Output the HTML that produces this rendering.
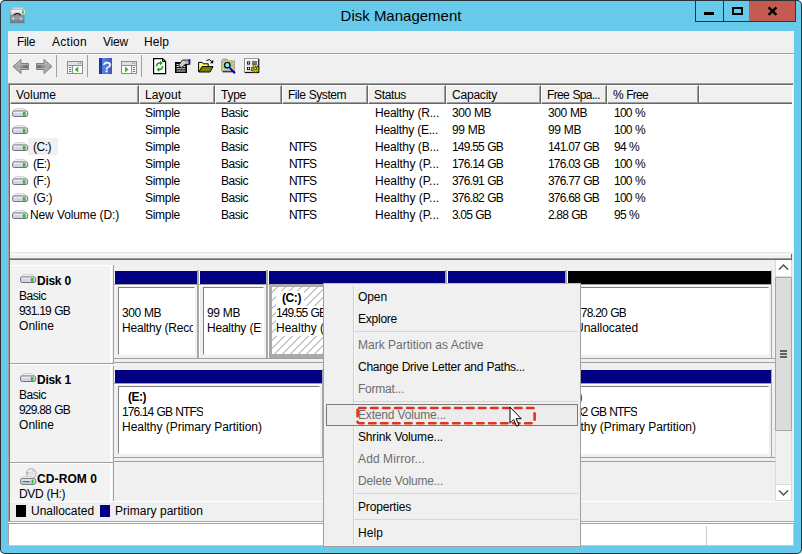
<!DOCTYPE html>
<html><head><meta charset="utf-8"><title>Disk Management</title>
<style>
html,body{margin:0;padding:0;background:#fff;}
body{width:802px;height:554px;position:relative;overflow:hidden;font-family:"Liberation Sans",sans-serif;font-size:12px;color:#000;}
#win div,#win span,#win svg{position:absolute;box-sizing:border-box;white-space:nowrap;}
#win{position:absolute;left:0;top:0;width:802px;height:554px;background:#67caea;box-shadow:inset 0 0 0 1px #2b3136;border-radius:5px;overflow:hidden;}
#win .t{line-height:14px;height:14px;font-size:12px;}
#win .u{line-height:15px;height:15px;font-size:12px;}
#win .b{font-weight:bold;}
#win .h{top:85px;height:19px;background:#f0f0f0;border-top:1px solid #fff;border-left:1px solid #fff;border-right:1px solid #696969;border-bottom:1px solid #696969;box-shadow:inset -1px -1px 0 #a0a0a0;}
#win .g{color:#6d6d6d;}
#win .sep{left:354px;width:224px;height:1px;background:#d7d7d7;}
</style></head><body>
<div id="win">
<div style="left:1px;width:800px;top:7px;text-align:center;font-size:15px;line-height:18px;height:18px;">Disk Management</div>
<div style="left:695px;top:1px;width:29px;height:21px;border:1px solid #2b3136;border-top:0;border-right:0"></div>
<div style="left:723px;top:1px;width:27px;height:21px;border:1px solid #2b3136;border-top:0;"></div>
<div style="left:749px;top:1px;width:47px;height:21px;background:#c55a50;border:1px solid #4a2a2a;border-top:0;border-left:0"></div>
<div style="left:704px;top:12px;width:10px;height:3px;background:#000"></div>
<div style="left:732px;top:7px;width:11px;height:8px;border:2px solid #000;"></div>
<svg style="left:766px;top:5px" width="13" height="12" viewBox="0 0 13 12"><path d="M2.6 2.4l7.8 7.4M10.4 2.4l-7.8 7.4" stroke="#000" stroke-width="2.5" fill="none"/></svg>
<svg style="left:10px;top:6px" width="17" height="18" viewBox="0 0 17 18"><defs><linearGradient id="ti1" x1="0" y1="0" x2="0" y2="1"><stop offset="0" stop-color="#fafafc"/><stop offset="1" stop-color="#c6c8d4"/></linearGradient><linearGradient id="ti2" x1="0" y1="0" x2="0" y2="1"><stop offset="0" stop-color="#9aa4ac"/><stop offset="1" stop-color="#6e7a84"/></linearGradient></defs><path d="M3.6 1.4h8.6l2.6 2h-13.8z" fill="#ececf0" stroke="#b8bac4" stroke-width=".7"/><rect x=".6" y="3.2" width="15" height="6.2" rx="1.6" fill="url(#ti1)" stroke="#9a9ca8" stroke-width=".8"/><rect x="12" y="4.2" width="1.8" height="3.6" fill="#2fd02f"/><path d="M3.6 9.2q3.6-3.4 7.2 0" fill="none" stroke="#1c1c1c" stroke-width="1.3"/><rect x=".6" y="9.8" width="13.4" height="7" fill="url(#ti2)" stroke="#66727c" stroke-width=".7"/><rect x="2.6" y="11.4" width="1.2" height="2.6" fill="#f2f2f2"/><rect x="10.4" y="11.4" width="1.2" height="2.6" fill="#f2f2f2"/><path d="M.8 12.6h13" stroke="#aab4bc" stroke-width=".6"/></svg>
<div style="left:8px;top:31px;width:786px;height:515px;background:#f0f0f0;"></div>
<div class="t" style="left:17px;top:35px;letter-spacing:-0.33px;">File</div>
<div class="t" style="left:52px;top:35px;letter-spacing:0.27px;">Action</div>
<div class="t" style="left:103px;top:35px;letter-spacing:-0.20px;">View</div>
<div class="t" style="left:144px;top:35px;letter-spacing:0.08px;">Help</div>
<div style="left:8px;top:53px;width:786px;height:1px;background:#a0a0a0"></div>
<div style="left:8px;top:54px;width:786px;height:1px;background:#fff"></div>
<div style="left:56px;top:55px;width:1px;height:22px;background:#a0a0a0"></div>
<div style="left:87px;top:55px;width:1px;height:22px;background:#a0a0a0"></div>
<div style="left:141px;top:55px;width:1px;height:22px;background:#a0a0a0"></div>
<svg style="left:8px;top:54px" width="262" height="28" viewBox="8 54 262 28">
<defs>
<linearGradient id="ag" x1="0" y1="0" x2="0" y2="1"><stop offset="0" stop-color="#c4c4c4"/><stop offset=".5" stop-color="#a6a6a6"/><stop offset="1" stop-color="#b8b8b8"/></linearGradient>
<linearGradient id="hg" x1="0" y1="0" x2="1" y2="0"><stop offset="0" stop-color="#1c3a9c"/><stop offset=".22" stop-color="#2a4cb4"/><stop offset=".28" stop-color="#5f82e0"/><stop offset="1" stop-color="#3458c4"/></linearGradient>
<linearGradient id="sg" x1="0" y1="0" x2="1" y2="0"><stop offset="0" stop-color="#a0a0a0"/><stop offset="1" stop-color="#5e5e5e"/></linearGradient><linearGradient id="sg2" x1="0" y1="0" x2="1" y2="0"><stop offset="0" stop-color="#5e5e5e"/><stop offset="1" stop-color="#a0a0a0"/></linearGradient>
</defs>
<!-- back / forward -->
<path d="M13 66.5L21 59.4V63.5H28.5V69.5H21V73.6Z" fill="url(#ag)" stroke="#7e7e7e" stroke-width="1" stroke-linejoin="round"/>
<path d="M52 66.5L44 59.4V63.5H36.5V69.5H44V73.6Z" fill="url(#ag)" stroke="#7e7e7e" stroke-width="1" stroke-linejoin="round"/>
<path d="M20 65.2h7.6v2.8H20z" fill="url(#sg)"/><path d="M37.4 65.2H45v2.8h-7.6z" fill="url(#sg2)"/>
<!-- console tree show/hide (left) -->
<rect x="67.5" y="61.5" width="15" height="12" fill="#fff" stroke="#8a8e98"/>
<rect x="68" y="62" width="14" height="3" fill="#dfe1e6"/>
<path d="M68 65.5h14" stroke="#8a8e98"/>
<path d="M72.5 65.5v8" stroke="#8a8e98"/>
<path d="M69 67.5h2.4M69 69.5h2.4M69 71.5h2.4" stroke="#3a78c8" stroke-width="1"/>
<path d="M78.3 66.6v5.8l-3.6-2.9z" fill="#3cb42c"/>
<rect x="78" y="62.6" width="1.2" height="1.2" fill="#8a8e98"/><rect x="80" y="62.6" width="1.2" height="1.2" fill="#8a8e98"/>
<!-- help -->
<rect x="99" y="58" width="13" height="16" fill="url(#hg)"/>
<rect x="99" y="58" width="3" height="16" fill="#1b3592" opacity=".6"/>
<text x="102.6" y="71.8" font-family="Liberation Sans, sans-serif" font-size="15.5" fill="#fff" stroke="#fff" stroke-width=".3">?</text>
<!-- console tree (right) -->
<rect x="121.5" y="61.5" width="15" height="12" fill="#fff" stroke="#8a8e98"/>
<rect x="122" y="62" width="14" height="3" fill="#dfe1e6"/>
<path d="M122 65.5h14" stroke="#8a8e98"/>
<path d="M131.5 65.5v8" stroke="#8a8e98"/>
<path d="M132.8 67.5h2.4M132.8 69.5h2.4M132.8 71.5h2.4" stroke="#3a78c8" stroke-width="1"/>
<path d="M125 66.6v5.8l3.6-2.9z" fill="#3cb42c"/>
<rect x="132" y="62.6" width="1.2" height="1.2" fill="#8a8e98"/><rect x="134" y="62.6" width="1.2" height="1.2" fill="#8a8e98"/>
<!-- refresh -->
<path d="M153.6 58.6h9l3 3v12h-12z" fill="#fff" stroke="#000" stroke-width="1.2"/>
<path d="M162.6 58.6v3h3" fill="none" stroke="#000" stroke-width="1"/>
<path d="M156.6 66.5a3 3 0 0 1 3-3.4h1" fill="none" stroke="#1a9a1a" stroke-width="1.5"/>
<path d="M160 60.8l2.6 2.3l-2.6 2.3z" fill="#1a9a1a"/>
<path d="M162.6 66.2a3 3 0 0 1-3 3.4h-1" fill="none" stroke="#1a9a1a" stroke-width="1.5"/>
<path d="M159.2 67.3l-2.6 2.3l2.6 2.3z" fill="#1a9a1a"/>
<!-- properties -->
<rect x="175" y="62" width="12" height="11" fill="#000"/>
<path d="M176.5 66.6h9M176.5 68.8h9M176.5 71h9" stroke="#e8e8e8" stroke-width="1"/>
<path d="M176.5 64.6h3" stroke="#e8e8e8" stroke-width="1"/>
<path d="M178.5 65.5l4-5.5h6.5v4.5h-4l-3.5 3.5z" fill="#b4b4b4" stroke="#000" stroke-width=".8"/>
<path d="M180 65l3.5-4M181.5 66l3.5-4" stroke="#fff" stroke-width=".8"/>
<rect x="189" y="59" width="1.4" height="5.6" fill="#1010c8"/>
<!-- open folder -->
<path d="M198.6 71.8v-9.4h3.6l1 1.4h5v2.8" fill="#ffff66" stroke="#000" stroke-width="1"/>
<path d="M198.8 72l3.2-5.4h11l-3 5.4z" fill="#808000" stroke="#000" stroke-width="1"/>
<path d="M206.5 60.5q3-2.4 5.6 1.2" fill="none" stroke="#000" stroke-width="1"/>
<path d="M213.2 59.8v3.4h-3.2z" fill="#000"/>
<!-- search -->
<path d="M221.5 71v-10.5l1.5-1.5h4l1.5 1.8h6v10.2z" fill="#b4b4b4" stroke="#989898" stroke-width=".8"/>
<path d="M222.5 71.8h12.5" stroke="#000" stroke-width="1"/>
<path d="M223 61h11M223 69.5h11M223 63v6M233 63v6" stroke="#f8f000" stroke-width="1.2" stroke-dasharray="1.2 1.2"/>
<circle cx="227.3" cy="65.2" r="2.7" fill="#7af0f0" stroke="#000" stroke-width="1.2"/>
<path d="M229.8 67.8l5.2 5.4" stroke="#0000e0" stroke-width="1.8"/>
<path d="M230.6 69.6l4 4.2" stroke="#000" stroke-width=".7"/>
<!-- grid + star -->
<rect x="244.5" y="58.7" width="14" height="13.6" fill="#e8e8e8" stroke="#8c8c8c"/>
<path d="M245 72.6h14M258.8 59v13.6" stroke="#000" stroke-width="1"/>
<path d="M245.5 59.6h12.4M245.5 59.6v12" stroke="#fff" stroke-width="1"/>
<rect x="247" y="61.5" width="3" height="3" fill="#000"/><rect x="247.8" y="62.2" width="1.4" height="1.4" fill="#fff"/>
<path d="M252 62h5M252 64h5" stroke="#000" stroke-width="1.2"/>
<rect x="247" y="67" width="3" height="3" fill="#000"/><rect x="247.8" y="67.6" width="1.4" height="1.6" fill="#fff"/>
<path d="M252 67.5v2.5h3.6v-2.5" fill="none" stroke="#000" stroke-width="1"/>
<path d="M255 64.6l.8 2.2l2.2-1.4l-.8 2.4l2.5.6l-2.2 1.2l1.4 2l-2.4-.5l-.4 2.1l-1.4-1.9l-1.7 1.5l.2-2.4l-2.4.2l1.9-1.5l-1.7-1.5l2.4-.2l-.2-2.4z" fill="#f4f000" stroke="#3a3a00" stroke-width=".6"/>
<path d="M253.8 67.2h2.6v2.6h-2.6z" fill="#e0e0e0" stroke="#000" stroke-width=".7"/>
</svg>

<div style="left:8px;top:83px;width:786px;height:171px;background:#fff;border:1px solid #a0a0a0;border-right-color:#f0f0f0;border-bottom-color:#f0f0f0;box-shadow:inset 1px 1px 0 #696969;"></div>
<div style="left:10px;top:85px;width:782px;height:19px;background:#f0f0f0;border-bottom:1px solid #696969;box-shadow:inset 0 -1px 0 #a0a0a0;"></div>
<div style="left:699px;top:85px;width:93px;height:17px;border-top:1px solid #fff;border-left:1px solid #fff;"></div>
<div class="h" style="left:10px;width:129px"></div>
<div class="t" style="left:16px;top:88px;">Volume</div>
<div class="h" style="left:139px;width:76px"></div>
<div class="t" style="left:145px;top:88px;">Layout</div>
<div class="h" style="left:215px;width:67px"></div>
<div class="t" style="left:221px;top:88px;letter-spacing:-0.25px;">Type</div>
<div class="h" style="left:282px;width:86px"></div>
<div class="t" style="left:288px;top:88px;letter-spacing:-0.47px;word-spacing:0.47px;">File System</div>
<div class="h" style="left:368px;width:78px"></div>
<div class="t" style="left:374px;top:88px;letter-spacing:-0.34px;">Status</div>
<div class="h" style="left:446px;width:95px"></div>
<div class="t" style="left:452px;top:88px;letter-spacing:-0.21px;">Capacity</div>
<div class="h" style="left:541px;width:66px"></div>
<div class="t" style="left:547px;top:88px;letter-spacing:-0.64px;word-spacing:0.64px;">Free Spa...</div>
<div class="h" style="left:607px;width:92px"></div>
<div class="t" style="left:613px;top:88px;letter-spacing:-0.74px;word-spacing:0.74px;">% Free</div>
<svg style="left:12px;top:108px" width="17" height="10" viewBox="0 0 17 10"><path d="M3.6 .6h8.4l3 2.4h-14.4z" fill="#f0f0f0" stroke="#c8c8c8" stroke-width=".8"/><rect x=".5" y="3" width="15.2" height="5.5" rx="1.8" fill="#d2d4e2" stroke="#70727a"/><rect x="1.5" y="3.7" width="13.2" height="1.1" fill="#f4f4fa"/><rect x="10.9" y="4" width="2.6" height="3.6" fill="#6e7078"/><rect x="11.4" y="4" width="1.6" height="3.6" fill="#2bd02b"/></svg>
<div class="t" style="left:145px;top:106px;letter-spacing:-0.28px;">Simple</div>
<div class="t" style="left:221px;top:106px;letter-spacing:-0.47px;">Basic</div>
<div class="t" style="left:375px;top:106px;letter-spacing:-0.22px;word-spacing:0.22px;">Healthy (R...</div>
<div class="t" style="left:452px;top:106px;letter-spacing:-0.47px;word-spacing:0.47px;">300 MB</div>
<div class="t" style="left:548px;top:106px;letter-spacing:-0.47px;word-spacing:0.47px;">300 MB</div>
<div class="t" style="left:614px;top:106px;letter-spacing:-0.76px;word-spacing:0.76px;">100 %</div>
<svg style="left:12px;top:125px" width="17" height="10" viewBox="0 0 17 10"><path d="M3.6 .6h8.4l3 2.4h-14.4z" fill="#f0f0f0" stroke="#c8c8c8" stroke-width=".8"/><rect x=".5" y="3" width="15.2" height="5.5" rx="1.8" fill="#d2d4e2" stroke="#70727a"/><rect x="1.5" y="3.7" width="13.2" height="1.1" fill="#f4f4fa"/><rect x="10.9" y="4" width="2.6" height="3.6" fill="#6e7078"/><rect x="11.4" y="4" width="1.6" height="3.6" fill="#2bd02b"/></svg>
<div class="t" style="left:145px;top:123px;letter-spacing:-0.28px;">Simple</div>
<div class="t" style="left:221px;top:123px;letter-spacing:-0.47px;">Basic</div>
<div class="t" style="left:375px;top:123px;letter-spacing:-0.25px;word-spacing:0.25px;">Healthy (E...</div>
<div class="t" style="left:452px;top:123px;letter-spacing:-0.42px;word-spacing:0.42px;">99 MB</div>
<div class="t" style="left:548px;top:123px;letter-spacing:-0.42px;word-spacing:0.42px;">99 MB</div>
<div class="t" style="left:614px;top:123px;letter-spacing:-0.76px;word-spacing:0.76px;">100 %</div>
<div style="left:28px;top:138px;width:30px;height:17px;background:#f0f0f0"></div>
<svg style="left:12px;top:142px" width="17" height="10" viewBox="0 0 17 10"><path d="M3.6 .6h8.4l3 2.4h-14.4z" fill="#f0f0f0" stroke="#c8c8c8" stroke-width=".8"/><rect x=".5" y="3" width="15.2" height="5.5" rx="1.8" fill="#d2d4e2" stroke="#70727a"/><rect x="1.5" y="3.7" width="13.2" height="1.1" fill="#f4f4fa"/><rect x="10.9" y="4" width="2.6" height="3.6" fill="#6e7078"/><rect x="11.4" y="4" width="1.6" height="3.6" fill="#2bd02b"/></svg>
<div class="t" style="left:33px;top:140px;letter-spacing:-0.50px;">(C:)</div>
<div class="t" style="left:145px;top:140px;letter-spacing:-0.28px;">Simple</div>
<div class="t" style="left:221px;top:140px;letter-spacing:-0.47px;">Basic</div>
<div class="t" style="left:289px;top:140px;letter-spacing:-1.08px;">NTFS</div>
<div class="t" style="left:375px;top:140px;letter-spacing:-0.17px;word-spacing:0.17px;">Healthy (B...</div>
<div class="t" style="left:452px;top:140px;letter-spacing:-0.80px;word-spacing:0.80px;">149.55 GB</div>
<div class="t" style="left:548px;top:140px;letter-spacing:-0.80px;word-spacing:0.80px;">141.07 GB</div>
<div class="t" style="left:614px;top:140px;letter-spacing:-0.78px;word-spacing:0.78px;">94 %</div>
<svg style="left:12px;top:159px" width="17" height="10" viewBox="0 0 17 10"><path d="M3.6 .6h8.4l3 2.4h-14.4z" fill="#f0f0f0" stroke="#c8c8c8" stroke-width=".8"/><rect x=".5" y="3" width="15.2" height="5.5" rx="1.8" fill="#d2d4e2" stroke="#70727a"/><rect x="1.5" y="3.7" width="13.2" height="1.1" fill="#f4f4fa"/><rect x="10.9" y="4" width="2.6" height="3.6" fill="#6e7078"/><rect x="11.4" y="4" width="1.6" height="3.6" fill="#2bd02b"/></svg>
<div class="t" style="left:33px;top:157px;letter-spacing:-0.58px;">(E:)</div>
<div class="t" style="left:145px;top:157px;letter-spacing:-0.28px;">Simple</div>
<div class="t" style="left:221px;top:157px;letter-spacing:-0.47px;">Basic</div>
<div class="t" style="left:289px;top:157px;letter-spacing:-1.08px;">NTFS</div>
<div class="t" style="left:375px;top:157px;letter-spacing:-0.04px;word-spacing:0.04px;">Healthy (P...</div>
<div class="t" style="left:452px;top:157px;letter-spacing:-0.80px;word-spacing:0.80px;">176.14 GB</div>
<div class="t" style="left:548px;top:157px;letter-spacing:-0.80px;word-spacing:0.80px;">176.03 GB</div>
<div class="t" style="left:614px;top:157px;letter-spacing:-0.76px;word-spacing:0.76px;">100 %</div>
<svg style="left:12px;top:176px" width="17" height="10" viewBox="0 0 17 10"><path d="M3.6 .6h8.4l3 2.4h-14.4z" fill="#f0f0f0" stroke="#c8c8c8" stroke-width=".8"/><rect x=".5" y="3" width="15.2" height="5.5" rx="1.8" fill="#d2d4e2" stroke="#70727a"/><rect x="1.5" y="3.7" width="13.2" height="1.1" fill="#f4f4fa"/><rect x="10.9" y="4" width="2.6" height="3.6" fill="#6e7078"/><rect x="11.4" y="4" width="1.6" height="3.6" fill="#2bd02b"/></svg>
<div class="t" style="left:33px;top:174px;letter-spacing:-0.41px;">(F:)</div>
<div class="t" style="left:145px;top:174px;letter-spacing:-0.28px;">Simple</div>
<div class="t" style="left:221px;top:174px;letter-spacing:-0.47px;">Basic</div>
<div class="t" style="left:289px;top:174px;letter-spacing:-1.08px;">NTFS</div>
<div class="t" style="left:375px;top:174px;letter-spacing:-0.04px;word-spacing:0.04px;">Healthy (P...</div>
<div class="t" style="left:452px;top:174px;letter-spacing:-0.80px;word-spacing:0.80px;">376.91 GB</div>
<div class="t" style="left:548px;top:174px;letter-spacing:-0.80px;word-spacing:0.80px;">376.77 GB</div>
<div class="t" style="left:614px;top:174px;letter-spacing:-0.76px;word-spacing:0.76px;">100 %</div>
<svg style="left:12px;top:193px" width="17" height="10" viewBox="0 0 17 10"><path d="M3.6 .6h8.4l3 2.4h-14.4z" fill="#f0f0f0" stroke="#c8c8c8" stroke-width=".8"/><rect x=".5" y="3" width="15.2" height="5.5" rx="1.8" fill="#d2d4e2" stroke="#70727a"/><rect x="1.5" y="3.7" width="13.2" height="1.1" fill="#f4f4fa"/><rect x="10.9" y="4" width="2.6" height="3.6" fill="#6e7078"/><rect x="11.4" y="4" width="1.6" height="3.6" fill="#2bd02b"/></svg>
<div class="t" style="left:33px;top:191px;letter-spacing:-0.42px;">(G:)</div>
<div class="t" style="left:145px;top:191px;letter-spacing:-0.28px;">Simple</div>
<div class="t" style="left:221px;top:191px;letter-spacing:-0.47px;">Basic</div>
<div class="t" style="left:289px;top:191px;letter-spacing:-1.08px;">NTFS</div>
<div class="t" style="left:375px;top:191px;letter-spacing:-0.04px;word-spacing:0.04px;">Healthy (P...</div>
<div class="t" style="left:452px;top:191px;letter-spacing:-0.80px;word-spacing:0.80px;">376.82 GB</div>
<div class="t" style="left:548px;top:191px;letter-spacing:-0.80px;word-spacing:0.80px;">376.68 GB</div>
<div class="t" style="left:614px;top:191px;letter-spacing:-0.76px;word-spacing:0.76px;">100 %</div>
<svg style="left:12px;top:210px" width="17" height="10" viewBox="0 0 17 10"><path d="M3.6 .6h8.4l3 2.4h-14.4z" fill="#f0f0f0" stroke="#c8c8c8" stroke-width=".8"/><rect x=".5" y="3" width="15.2" height="5.5" rx="1.8" fill="#d2d4e2" stroke="#70727a"/><rect x="1.5" y="3.7" width="13.2" height="1.1" fill="#f4f4fa"/><rect x="10.9" y="4" width="2.6" height="3.6" fill="#6e7078"/><rect x="11.4" y="4" width="1.6" height="3.6" fill="#2bd02b"/></svg>
<div class="t" style="left:30px;top:208px;letter-spacing:-0.13px;word-spacing:0.13px;">New Volume (D:)</div>
<div class="t" style="left:145px;top:208px;letter-spacing:-0.28px;">Simple</div>
<div class="t" style="left:221px;top:208px;letter-spacing:-0.47px;">Basic</div>
<div class="t" style="left:289px;top:208px;letter-spacing:-1.08px;">NTFS</div>
<div class="t" style="left:375px;top:208px;letter-spacing:-0.04px;word-spacing:0.04px;">Healthy (P...</div>
<div class="t" style="left:452px;top:208px;letter-spacing:-0.84px;word-spacing:0.84px;">3.05 GB</div>
<div class="t" style="left:548px;top:208px;letter-spacing:-0.84px;word-spacing:0.84px;">2.88 GB</div>
<div class="t" style="left:614px;top:208px;letter-spacing:-0.78px;word-spacing:0.78px;">95 %</div>
<div style="left:10px;top:252px;width:784px;height:8px;background:#f0f0f0"></div>
<div style="left:10px;top:252px;width:782px;height:1px;background:#e6e6e6"></div>
<div style="left:10px;top:254px;width:782px;height:1px;background:#fff"></div>
<div style="left:10px;top:258px;width:782px;height:1px;background:#a0a0a0"></div>
<div style="left:10px;top:259px;width:782px;height:1px;background:#696969"></div>
<div style="left:791px;top:254px;width:1px;height:5px;background:#696969"></div>
<div style="left:8px;top:84px;width:1px;height:438px;background:#a0a0a0"></div>
<div style="left:9px;top:85px;width:1px;height:436px;background:#696969"></div>
<div style="left:10px;top:260px;width:765px;height:242px;background:#f0f0f0;overflow:hidden">
<div style="left:0;top:5px;width:103px;height:99px;background:#f2f2f2;border-bottom:1px solid #a0a0a0;"></div>
<div style="left:100px;top:5px;width:2px;height:98px;background:#fff"></div>
<div style="left:0;top:5px;width:102px;height:1px;background:#fff"></div>
<div style="left:103px;top:5px;width:1px;height:99px;background:#a0a0a0"></div>
<svg style="left:10px;top:14px" width="17" height="10" viewBox="0 0 17 10"><path d="M3.6 .6h8.4l3 2.4h-14.4z" fill="#f0f0f0" stroke="#c8c8c8" stroke-width=".8"/><rect x=".5" y="3" width="15.2" height="5.5" rx="1.8" fill="#d2d4e2" stroke="#70727a"/><rect x="1.5" y="3.7" width="13.2" height="1.1" fill="#f4f4fa"/><rect x="10.9" y="4" width="2.6" height="3.6" fill="#6e7078"/><rect x="11.4" y="4" width="1.6" height="3.6" fill="#2bd02b"/></svg>
<div class="u b" style="left:27px;top:14px;letter-spacing:-0.27px;word-spacing:0.27px;">Disk 0</div>
<div class="u" style="left:9px;top:29px;letter-spacing:-0.47px;">Basic</div>
<div class="u" style="left:9px;top:44px;letter-spacing:-0.80px;word-spacing:0.80px;">931.19 GB</div>
<div class="u" style="left:9px;top:59px;letter-spacing:0.05px;">Online</div>
<div style="left:103px;top:98px;width:662px;height:1px;background:#a0a0a0"></div>
<div style="left:103px;top:102px;width:662px;height:1px;background:#a0a0a0"></div>
<div style="left:105px;top:11px;width:82px;height:13px;background:#000080"></div>
<div style="left:104px;top:24px;width:83px;height:1px;background:#a0a0a0"></div>
<div style="left:105px;top:25px;width:82px;height:1px;background:#fff"></div>
<div style="left:187px;top:10px;width:2px;height:88px;background:#a8a8a8"></div>
<div style="left:189px;top:10px;width:1px;height:88px;background:#fff"></div>
<div style="left:108px;top:27px;width:77px;height:68px;background:#fff;border-top:1px solid #808080;border-left:1px solid #808080;border-right:1px solid #fff;border-bottom:1px solid #fff"></div>
<div class="u" style="left:112px;top:46px;letter-spacing:-0.47px;word-spacing:0.47px;max-width:71px;overflow:hidden">300 MB</div>
<div class="u" style="left:112px;top:61px;letter-spacing:-0.21px;word-spacing:0.21px;max-width:71px;overflow:hidden">Healthy (Recovery Partition)</div>
<div style="left:190px;top:11px;width:66px;height:13px;background:#000080"></div>
<div style="left:189px;top:24px;width:67px;height:1px;background:#a0a0a0"></div>
<div style="left:190px;top:25px;width:66px;height:1px;background:#fff"></div>
<div style="left:256px;top:10px;width:2px;height:88px;background:#a8a8a8"></div>
<div style="left:258px;top:10px;width:1px;height:88px;background:#fff"></div>
<div style="left:193px;top:27px;width:61px;height:68px;background:#fff;border-top:1px solid #808080;border-left:1px solid #808080;border-right:1px solid #fff;border-bottom:1px solid #fff"></div>
<div class="u" style="left:197px;top:46px;letter-spacing:-0.42px;word-spacing:0.42px;max-width:55px;overflow:hidden">99 MB</div>
<div class="u" style="left:197px;top:61px;letter-spacing:-0.22px;word-spacing:0.22px;max-width:55px;overflow:hidden">Healthy (EFI System Partition)</div>
<div style="left:259px;top:11px;width:176px;height:13px;background:#000080"></div>
<div style="left:258px;top:24px;width:177px;height:1px;background:#a0a0a0"></div>
<div style="left:259px;top:25px;width:176px;height:1px;background:#fff"></div>
<div style="left:435px;top:10px;width:2px;height:88px;background:#a8a8a8"></div>
<div style="left:437px;top:10px;width:1px;height:88px;background:#fff"></div>
<div style="left:259px;top:24px;width:176px;height:74px;background:#a9a9a9"></div>
<svg style="left:262px;top:27px" width="170" height="67"><defs><pattern id="hat" width="8" height="8" patternUnits="userSpaceOnUse" x="3" y="2.5"><path d="M-1 9L9 -1M-1 1L1 -1M7 9L9 7" stroke="#808080" stroke-width="0.9" fill="none"/></pattern></defs><rect width="100%" height="100%" fill="#fff"/><rect width="100%" height="100%" fill="url(#hat)"/></svg>
<div class="u b" style="left:266px;top:31px;letter-spacing:-0.41px;background:#fff;padding-left:6px;padding-right:3px;max-width:165px;overflow:hidden">(C:)</div>
<div class="u" style="left:266px;top:46px;letter-spacing:-0.92px;word-spacing:0.92px;background:#fff;max-width:165px;overflow:hidden">149.55 GB NTFS</div>
<div class="u" style="left:266px;top:61px;background:#fff;max-width:165px;overflow:hidden">Healthy (Boot, Page File, Crash Dump, Primary Partition)</div>
<div style="left:438px;top:11px;width:117px;height:13px;background:#000080"></div>
<div style="left:437px;top:24px;width:118px;height:1px;background:#a0a0a0"></div>
<div style="left:438px;top:25px;width:117px;height:1px;background:#fff"></div>
<div style="left:555px;top:10px;width:2px;height:88px;background:#a8a8a8"></div>
<div style="left:557px;top:10px;width:1px;height:88px;background:#fff"></div>
<div style="left:441px;top:27px;width:112px;height:68px;background:#fff;border-top:1px solid #808080;border-left:1px solid #808080;border-right:1px solid #fff;border-bottom:1px solid #fff"></div>
<div class="u b" style="left:451px;top:31px;letter-spacing:-0.16px;max-width:100px;overflow:hidden">(D:)</div>
<div class="u" style="left:445px;top:46px;letter-spacing:-0.97px;word-spacing:0.97px;max-width:106px;overflow:hidden">3.05 GB NTFS</div>
<div class="u" style="left:445px;top:61px;letter-spacing:-0.03px;word-spacing:0.03px;max-width:106px;overflow:hidden">Healthy (Primary Partition)</div>
<div style="left:558px;top:11px;width:203px;height:13px;background:#000000"></div>
<div style="left:557px;top:24px;width:204px;height:1px;background:#a0a0a0"></div>
<div style="left:558px;top:25px;width:203px;height:1px;background:#fff"></div>
<div style="left:761px;top:10px;width:1px;height:88px;background:#a8a8a8"></div>
<div style="left:561px;top:27px;width:198px;height:68px;background:#fff;border-top:1px solid #808080;border-left:1px solid #808080;border-right:1px solid #fff;border-bottom:1px solid #fff"></div>
<div class="u" style="left:565px;top:46px;letter-spacing:-0.80px;word-spacing:0.80px;max-width:192px;overflow:hidden">778.20 GB</div>
<div class="u" style="left:565px;top:61px;letter-spacing:-0.03px;max-width:192px;overflow:hidden">Unallocated</div>
<div style="left:0;top:104px;width:103px;height:99px;background:#f2f2f2;border-bottom:1px solid #a0a0a0;"></div>
<div style="left:100px;top:104px;width:2px;height:98px;background:#fff"></div>
<div style="left:0;top:104px;width:102px;height:1px;background:#fff"></div>
<div style="left:103px;top:106px;width:1px;height:99px;background:#a0a0a0"></div>
<svg style="left:10px;top:113px" width="17" height="10" viewBox="0 0 17 10"><path d="M3.6 .6h8.4l3 2.4h-14.4z" fill="#f0f0f0" stroke="#c8c8c8" stroke-width=".8"/><rect x=".5" y="3" width="15.2" height="5.5" rx="1.8" fill="#d2d4e2" stroke="#70727a"/><rect x="1.5" y="3.7" width="13.2" height="1.1" fill="#f4f4fa"/><rect x="10.9" y="4" width="2.6" height="3.6" fill="#6e7078"/><rect x="11.4" y="4" width="1.6" height="3.6" fill="#2bd02b"/></svg>
<div class="u b" style="left:27px;top:113px;letter-spacing:-0.27px;word-spacing:0.27px;">Disk 1</div>
<div class="u" style="left:9px;top:128px;letter-spacing:-0.47px;">Basic</div>
<div class="u" style="left:9px;top:143px;letter-spacing:-0.80px;word-spacing:0.80px;">929.88 GB</div>
<div class="u" style="left:9px;top:158px;letter-spacing:0.05px;">Online</div>
<div style="left:103px;top:197px;width:662px;height:1px;background:#a0a0a0"></div>
<div style="left:103px;top:201px;width:662px;height:1px;background:#a0a0a0"></div>
<div style="left:105px;top:110px;width:207px;height:13px;background:#000080"></div>
<div style="left:104px;top:123px;width:208px;height:1px;background:#a0a0a0"></div>
<div style="left:105px;top:124px;width:207px;height:1px;background:#fff"></div>
<div style="left:312px;top:109px;width:2px;height:88px;background:#a8a8a8"></div>
<div style="left:314px;top:109px;width:1px;height:88px;background:#fff"></div>
<div style="left:108px;top:126px;width:202px;height:68px;background:#fff;border-top:1px solid #808080;border-left:1px solid #808080;border-right:1px solid #fff;border-bottom:1px solid #fff"></div>
<div class="u b" style="left:118px;top:130px;letter-spacing:-0.50px;max-width:190px;overflow:hidden">(E:)</div>
<div class="u" style="left:112px;top:145px;letter-spacing:-0.92px;word-spacing:0.92px;max-width:196px;overflow:hidden">176.14 GB NTFS</div>
<div class="u" style="left:112px;top:160px;letter-spacing:-0.03px;word-spacing:0.03px;max-width:196px;overflow:hidden">Healthy (Primary Partition)</div>
<div style="left:315px;top:110px;width:219px;height:13px;background:#000080"></div>
<div style="left:314px;top:123px;width:220px;height:1px;background:#a0a0a0"></div>
<div style="left:315px;top:124px;width:219px;height:1px;background:#fff"></div>
<div style="left:534px;top:109px;width:2px;height:88px;background:#a8a8a8"></div>
<div style="left:536px;top:109px;width:1px;height:88px;background:#fff"></div>
<div style="left:318px;top:126px;width:214px;height:68px;background:#fff;border-top:1px solid #808080;border-left:1px solid #808080;border-right:1px solid #fff;border-bottom:1px solid #fff"></div>
<div class="u b" style="left:328px;top:130px;letter-spacing:-0.58px;max-width:202px;overflow:hidden">(F:)</div>
<div class="u" style="left:322px;top:145px;letter-spacing:-0.92px;word-spacing:0.92px;max-width:208px;overflow:hidden">376.91 GB NTFS</div>
<div class="u" style="left:322px;top:160px;letter-spacing:-0.03px;word-spacing:0.03px;max-width:208px;overflow:hidden">Healthy (Primary Partition)</div>
<div style="left:539px;top:110px;width:222px;height:13px;background:#000080"></div>
<div style="left:538px;top:123px;width:223px;height:1px;background:#a0a0a0"></div>
<div style="left:539px;top:124px;width:222px;height:1px;background:#fff"></div>
<div style="left:761px;top:109px;width:1px;height:88px;background:#a8a8a8"></div>
<div style="left:542px;top:126px;width:217px;height:68px;background:#fff;border-top:1px solid #808080;border-left:1px solid #808080;border-right:1px solid #fff;border-bottom:1px solid #fff"></div>
<div class="u b" style="left:552px;top:130px;letter-spacing:-0.33px;max-width:205px;overflow:hidden">(G:)</div>
<div class="u" style="left:546px;top:145px;letter-spacing:-0.92px;word-spacing:0.92px;max-width:211px;overflow:hidden">376.82 GB NTFS</div>
<div class="u" style="left:546px;top:160px;letter-spacing:-0.03px;word-spacing:0.03px;max-width:211px;overflow:hidden">Healthy (Primary Partition)</div>
<div style="left:0;top:203px;width:103px;height:60px;background:#f2f2f2;border-bottom:1px solid #a0a0a0;"></div>
<div style="left:100px;top:203px;width:2px;height:59px;background:#fff"></div>
<div style="left:0;top:203px;width:102px;height:1px;background:#fff"></div>
<div style="left:103px;top:205px;width:1px;height:60px;background:#a0a0a0"></div>
<svg style="left:10px;top:208px" width="17" height="17" viewBox="0 0 17 17"><circle cx="11.2" cy="5.6" r="4.9" fill="#ececf2" stroke="#a4a6ae" stroke-width=".9"/><path d="M9.6 5.2L7.1 3.9A4.7 4.7 0 0 0 6.8 6.2z" fill="#5fe05f"/><path d="M12.4 3.8l1-2.4a4.7 4.7 0 0 1 1.8 1.8z" fill="#c9a6e6"/><circle cx="11.2" cy="5.6" r="1.3" fill="#fff" stroke="#b0b2ba" stroke-width=".6"/><path d="M3.4 8.6h8.2l3.4 2.4h-14.6z" fill="#f0f0f2" stroke="#c0c2c8" stroke-width=".8"/><rect x=".5" y="10.6" width="15.2" height="5.8" rx="2" fill="#d0d2de" stroke="#74767f"/><rect x="1.6" y="11.4" width="13" height="1" fill="#eeeef6"/><rect x="2.4" y="13" width="7.4" height="1.3" rx=".6" fill="#6a6c76"/><rect x="11.6" y="11.6" width="1.8" height="3.8" fill="#27c827"/></svg>
<div class="u b" style="left:27px;top:212px;letter-spacing:0.10px;word-spacing:-0.10px;">CD-ROM 0</div>
<div class="u" style="left:9px;top:227px;letter-spacing:-0.38px;word-spacing:0.38px;">DVD (H:)</div>
</div>
<div style="left:10px;top:501px;width:782px;height:21px;background:#f0f0f0;border-top:1px solid #fff"></div>
<div style="left:16px;top:505px;width:10px;height:12px;background:#000"></div>
<div class="u" style="left:31px;top:504px;letter-spacing:-0.03px;">Unallocated</div>
<div style="left:100px;top:505px;width:10px;height:12px;background:#000080"></div>
<div class="u" style="left:115px;top:504px;letter-spacing:0.04px;word-spacing:-0.04px;">Primary partition</div>
<div style="left:9px;top:521px;width:785px;height:1px;background:#a8a8a8"></div>
<div style="left:9px;top:522px;width:785px;height:1px;background:#fff"></div>
<div style="left:775px;top:260px;width:17px;height:241px;background:#f0f0f0;border-left:1px solid #dadada;border-right:1px solid #dadada"></div>
<div style="left:775px;top:260px;width:17px;height:17px;background:#fff;border:1px solid #dadada;border-top:0"></div>
<div style="left:775px;top:484px;width:17px;height:17px;background:#fff;border:1px solid #dadada"></div>
<div style="left:775px;top:277px;width:17px;height:154px;background:#dcdcdc;border:1px solid #a6a6a6"></div>
<div style="left:780px;top:350px;width:7px;height:2px;background:#606060"></div>
<div style="left:780px;top:353px;width:7px;height:2px;background:#606060"></div>
<div style="left:780px;top:356px;width:7px;height:2px;background:#606060"></div>
<svg style="left:778px;top:263px" width="11" height="8" viewBox="0 0 11 8"><path d="M1 6.5l4.5-4.5l4.5 4.5" fill="none" stroke="#505050" stroke-width="1.5"/></svg>
<svg style="left:778px;top:489px" width="11" height="8" viewBox="0 0 11 8"><path d="M1 1.5l4.5 4.5l4.5-4.5" fill="none" stroke="#505050" stroke-width="1.5"/></svg>
<div style="left:8px;top:523px;width:786px;height:23px;background:#fff;border-top:1px solid #a0a0a0;border-left:1px solid #a0a0a0;border-bottom:1px solid #c8c8c8;border-right:1px solid #c8c8c8"></div>
<div style="left:706px;top:526px;width:1px;height:19px;background:#c8c8c8"></div>
<div style="left:323px;top:283px;width:258px;height:264px;background:#f0f0f0;border:1px solid #a0a0a0;border-top-color:#c0c0c0"></div>
<div style="left:353px;top:286px;width:1px;height:258px;background:#d0d0d0"></div>
<div style="left:354px;top:286px;width:1px;height:258px;background:#fafafa"></div>
<div style="left:326px;top:404px;width:252px;height:22px;background:#ececec;border:1px solid #7a7a7a"></div>
<div class="t" style="left:358px;top:290px;letter-spacing:-0.09px;">Open</div>
<div class="t" style="left:358px;top:312px;letter-spacing:-0.24px;">Explore</div>
<div class="t g" style="left:358px;top:338px;">Mark Partition as Active</div>
<div class="t" style="left:358px;top:360px;letter-spacing:-0.28px;word-spacing:0.28px;">Change Drive Letter and Paths...</div>
<div class="t g" style="left:358px;top:382px;letter-spacing:-0.22px;">Format...</div>
<div class="t g" style="left:358px;top:408px;letter-spacing:-0.18px;word-spacing:0.18px;">Extend Volume...</div>
<div class="t" style="left:358px;top:430px;letter-spacing:-0.16px;word-spacing:0.16px;">Shrink Volume...</div>
<div class="t g" style="left:358px;top:452px;letter-spacing:0.14px;word-spacing:-0.14px;">Add Mirror...</div>
<div class="t g" style="left:358px;top:474px;letter-spacing:-0.20px;word-spacing:0.20px;">Delete Volume...</div>
<div class="t" style="left:358px;top:500px;letter-spacing:-0.17px;">Properties</div>
<div class="t" style="left:358px;top:526px;letter-spacing:0.08px;">Help</div>
<div class="sep" style="top:331px"></div>
<div class="sep" style="top:401px"></div>
<div class="sep" style="top:493px"></div>
<div class="sep" style="top:519px"></div>
<svg style="left:352px;top:402px" width="190" height="28" viewBox="0 0 190 28"><rect x="5.6" y="6" width="177" height="15.2" rx="1.5" fill="none" stroke="#e23319" stroke-width="2.6" stroke-dasharray="6.4 5.6" stroke-linecap="round"/></svg>
<svg style="left:509px;top:406px" width="14" height="22" viewBox="0 0 14 22"><path d="M1 1v16.2l3.7-3.6l2.9 6.6l2.4-1l-2.9-6.5h5.1z" fill="#fff" stroke="#000" stroke-width="1" stroke-linejoin="miter"/></svg>
</div>
</body></html>
